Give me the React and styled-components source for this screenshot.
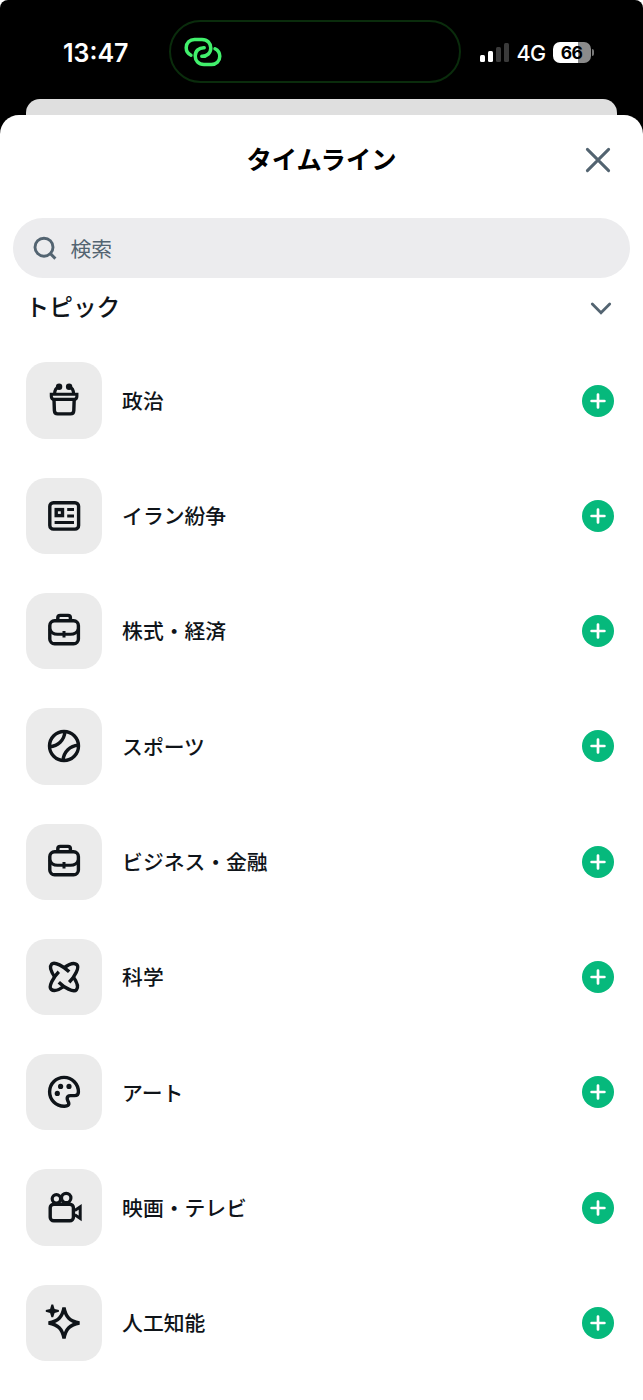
import React from "react";
import styled, { createGlobalStyle } from "styled-components";

const GlobalStyle = createGlobalStyle`
  * {
    box-sizing: border-box;
  }

  body {
    margin: 0;
    background: white;
    font-family: "Noto Sans CJK JP", sans-serif;
  }
`;

const Screen = styled.div`
  width: 643px;
  height: 1400px;
  overflow: hidden;
  background: black;
  border-radius: 8px 8px 0 0;
  display: flex;
  flex-direction: column;
`;

const StatusBar = styled.div`
  height: 99.3px;
  flex-shrink: 0;
  display: flex;
  align-items: flex-start;
  padding: 20px 49px 0 63px;
  color: white;
  font-family: Inter, sans-serif;
`;

const Time = styled.div`
  width: 106px;
  height: 64px;
  line-height: 66px;
  font-size: 25px;
  font-weight: 600;
`;

const Island = styled.div`
  width: 292px;
  height: 63px;
  border: 2px solid #0a2c0c;
  border-radius: 32px;
  display: flex;
  align-items: center;
  padding-left: 13px;
`;

const StatusRight = styled.div`
  margin-left: 19px;
  height: 64px;
  display: flex;
  align-items: center;
`;

const Signal = styled.div`
  display: flex;
  align-items: flex-end;
  gap: 3px;
  height: 19px;
`;

const Bar = styled.div`
  width: 5px;
  height: ${(props) => props.$height}px;
  border-radius: 1.5px;
  background: ${(props) => (props.$on ? "white" : "#3a3a3a")};
`;

const Network = styled.div`
  width: 29px;
  margin-left: 7.5px;
  margin-right: 7px;
  font-size: 21.5px;
  font-weight: 500;
  line-height: 30px;
  letter-spacing: -0.6px;
  padding-top: 1px;
  white-space: nowrap;
`;

const Battery = styled.div`
  width: 38px;
  height: 21px;
  border-radius: 7px;
  background: linear-gradient(90deg, white 66%, #8b8b8b 66%);
  color: black;
  font-size: 17.5px;
  font-weight: 700;
  line-height: 21px;
  text-align: center;
  letter-spacing: -0.5px;
`;

const BatteryTip = styled.div`
  width: 2px;
  height: 7px;
  margin-left: 1px;
  border-radius: 0 3px 3px 0;
  background: #777;
`;

const BackCard = styled.div`
  height: 16px;
  flex-shrink: 0;
  margin: 0 26px;
  border-radius: 14px 14px 0 0;
  background: #dfdfdf;
`;

const Sheet = styled.div`
  flex: 1;
  background: white;
  border-radius: 19px 19px 0 0;
`;

const Header = styled.div`
  height: 103.2px;
  display: grid;
  grid-template-columns: 60px 1fr 60px;
  align-items: start;
  padding: 24.2px 15px 0;
`;

const Title = styled.h1`
  grid-column: 2;
  margin: 0;
  text-align: center;
  font-size: 25.3px;
  font-weight: 700;
  line-height: 39px;
`;

const CloseButton = styled.button`
  height: 41.5px;
  padding: 0;
  border: none;
  background: none;
  display: flex;
  align-items: center;
  justify-content: center;
`;

const SearchBox = styled.div`
  height: 59.5px;
  margin: 0 13px;
  padding-left: 20px;
  border-radius: 30px;
  background: #ececee;
  color: #536471;
  display: flex;
  align-items: center;
  gap: 13.5px;
  font-size: 20.8px;
`;

const SectionHeader = styled.div`
  height: 60px;
  margin-bottom: 4.9px;
  padding: 0 31px 0 25.5px;
  display: flex;
  align-items: center;
  justify-content: space-between;
`;

const SectionTitle = styled.h2`
  margin: 0;
  padding-bottom: 3px;
  font-size: 23.7px;
  font-weight: 500;
  line-height: 36px;
  color: #0f1419;
`;

const Row = styled.div`
  height: 115.3px;
  padding: 0 29px 0 26px;
  display: flex;
  align-items: center;
`;

const Tile = styled.div`
  width: 76.3px;
  height: 76.3px;
  border-radius: 20px;
  background: #ebebeb;
  display: flex;
  align-items: center;
  justify-content: center;
`;

const Label = styled.div`
  flex: 1;
  margin-left: 19.8px;
  padding-bottom: 1.4px;
  color: #0f1419;
  font-size: 20.8px;
  font-weight: 500;
  line-height: 30px;
`;

const AddButton = styled.button`
  width: 32px;
  height: 32px;
  padding: 0;
  border: none;
  border-radius: 50%;
  background: #06b97c;
  display: flex;
  align-items: center;
  justify-content: center;
`;

const TopicSvg = styled.svg`
  width: 40px;
  height: 40px;
  fill: none;
  stroke: #0f1419;
  stroke-width: 3.4;

  .solid {
    fill: #0f1419;
    stroke: none;
  }
`;

const Briefcase = () => (
  <>
    <rect x="-14.2" y="-10.2" width="28.6" height="23" rx="4.8" />
    <path d="M-6.2-10.4v-2.8q0-2.4 2.4-2.4h7.8q2.4 0 2.4 2.4v2.8" />
    <path d="M-14.2-2Q-12.5 3.3-6.5 3.3h13Q12.5 3.3 14.4-2M0 0v6.6" strokeWidth="3" />
  </>
);

const SCIENCE_ARC = "M5.2-5.2C0-10.4-9.6-16-12.4-12.8C-15.2-9.6-12.2-4-9 .4";

// every icon is drawn around its own center
const ICONS = {
  politics: (
    <>
      <circle className="solid" cx="-4.9" cy="-14.3" r="3.2" />
      <circle className="solid" cx="5.1" cy="-14.3" r="3.2" />
      <path d="M-5-14Q-9.4-13-9.4-6.8M5.2-14Q9.6-13 9.6-6.8" strokeWidth="3.2" />
      <path d="M-12.7-6.8h25.6v2q0 3.2-3 3.2h-19.6q-3 0-3-3.2z" strokeWidth="3.1" />
      <path d="M-10-1.6l.4 11.2q.2 3.3 3.3 3.3H6.5q3.1 0 3.3-3.3l.4-11.2" />
    </>
  ),
  news: (
    <>
      <rect x="-14.2" y="-13.3" width="28.8" height="26.4" rx="3.6" />
      <rect x="-7.8" y="-6.4" width="6.3" height="6" />
      <path d="M3.2-6.5h6.8M3.2 0h6.8M-9.4 6.6h19.4" strokeWidth="3" />
    </>
  ),
  briefcase: <Briefcase />,
  sports: (
    <>
      <circle r="14.5" />
      <path d="M1-14.3C.2-5.5-6 .2-14.3.7M-1 14.3C-.2 5.5 6-.2 14.3-.7" />
    </>
  ),
  science: (
    <>
      <path d={SCIENCE_ARC} />
      <path d={SCIENCE_ARC} transform="rotate(90)" />
      <path d={SCIENCE_ARC} transform="rotate(180)" />
      <path d={SCIENCE_ARC} transform="rotate(270)" />
    </>
  ),
  art: (
    <>
      <path d="M14.4 0A14.4 14.4 0 1 0 0 14.2C3.6 14.4 5.4 13.2 4.6 10.6C3.9 8.6 3 7.8 3.2 6Q3.5 3.6 6.4 3.6H10.6Q14.4 3.6 14.4 0Z" />
      <circle className="solid" cx="-3.4" cy="-5.6" r="2.6" />
      <circle className="solid" cx="5" cy="-5.6" r="2.6" />
      <circle className="solid" cx="-6.7" cy="1.4" r="2.6" />
    </>
  ),
  movies: (
    <>
      <circle cx="-7.6" cy="-9.2" r="4.2" strokeWidth="3.2" />
      <circle cx="2.2" cy="-10" r="4.7" strokeWidth="3.2" />
      <rect x="-13.8" y="-3.8" width="23.2" height="16.6" rx="3.6" />
      <path d="M10.8 2.6L16.2-1.2V10.4L10.8 6.8" strokeWidth="3" />
    </>
  ),
  ai: (
    <>
      <path
        d="M0-15.4C1.8-5.8 5.8-1.8 15.4 0C5.8 1.8 1.8 5.8 0 15.4C-1.8 5.8-5.8 1.8-15.4 0C-5.8-1.8-1.8-5.8 0-15.4Z"
        strokeLinejoin="bevel"
      />
      <path
        className="solid"
        d="M-12.6-18.4h1.8l1.4 4.3 4.3 1.2v1.6l-4.3 1.3-1.4 4.3h-1.8l-1.3-4.3-4.3-1.3v-1.6l4.3-1.2z"
      />
    </>
  ),
};

const TOPICS = [
  { key: "politics", title: "政治", icon: "politics" },
  { key: "iran", title: "イラン紛争", icon: "news" },
  { key: "stocks", title: "株式・経済", icon: "briefcase" },
  { key: "sports", title: "スポーツ", icon: "sports" },
  { key: "business", title: "ビジネス・金融", icon: "briefcase" },
  { key: "science", title: "科学", icon: "science" },
  { key: "art", title: "アート", icon: "art" },
  { key: "movies", title: "映画・テレビ", icon: "movies" },
  { key: "ai", title: "人工知能", icon: "ai" },
];

const HotspotIcon = () => (
  <svg width="38" height="30" viewBox="0 0 38 30" fill="none" stroke="#41f06c" strokeWidth="3.5" strokeLinecap="round">
    <path d="M7 18.2C3.5 16.5 2.2 13.5 2.2 10.7C2.2 5.8 5.8 2.5 10.5 2.5H18C23.5 2.5 26.8 6.3 26.8 11C26.8 16 23 19.5 17.8 19.3" />
    <path d="M31 11.8C34.5 13.5 35.8 16.5 35.8 19.3C35.8 24.2 32.2 27.5 27.5 27.5H20C14.5 27.5 11.2 23.7 11.2 19C11.2 14 15 10.5 20.2 10.7" />
  </svg>
);

const TopicRow = ({ topic }) => (
  <Row>
    <Tile>
      <TopicSvg viewBox="-20 -20 40 40">{ICONS[topic.icon]}</TopicSvg>
    </Tile>
    <Label>{topic.title}</Label>
    <AddButton aria-label="add">
      <svg width="16" height="16" viewBox="0 0 16 16" stroke="white" strokeWidth="2.7" strokeLinecap="round">
        <path d="M8 1.6v12.8M1.6 8h12.8" />
      </svg>
    </AddButton>
  </Row>
);

const App = () => {
  return (
    <>
      <GlobalStyle />
      <Screen>
        <StatusBar>
          <Time>13:47</Time>
          <Island>
            <HotspotIcon />
          </Island>
          <StatusRight>
            <Signal>
              <Bar $height={7} $on />
              <Bar $height={11} $on />
              <Bar $height={15} />
              <Bar $height={19} />
            </Signal>
            <Network>4G</Network>
            <Battery>66</Battery>
            <BatteryTip />
          </StatusRight>
        </StatusBar>
        <BackCard />
        <Sheet>
          <Header>
            <Title>タイムライン</Title>
            <CloseButton aria-label="close">
              <svg width="26" height="26" viewBox="0 0 26 26" stroke="#536471" strokeWidth="3" strokeLinecap="round">
                <path d="M2.4 2.4l21.2 21.2M23.6 2.4L2.4 23.6" />
              </svg>
            </CloseButton>
          </Header>
          <SearchBox>
            <svg width="24" height="24" viewBox="0 0 24 24" fill="none" stroke="#536471" strokeWidth="2.9">
              <circle cx="11" cy="11.2" r="9" />
              <path d="M17.2 17.4l5.2 5.2" />
            </svg>
            検索
          </SearchBox>
          <SectionHeader>
            <SectionTitle>トピック</SectionTitle>
            <svg width="22" height="14" viewBox="0 0 22 14" fill="none" stroke="#536471" strokeWidth="2.8" strokeLinecap="round">
              <path d="M2.3 3L11 11.7L19.7 3" />
            </svg>
          </SectionHeader>
          {TOPICS.map((topic) => (
            <TopicRow key={topic.key} topic={topic} />
          ))}
        </Sheet>
      </Screen>
    </>
  );
};

export default App;
